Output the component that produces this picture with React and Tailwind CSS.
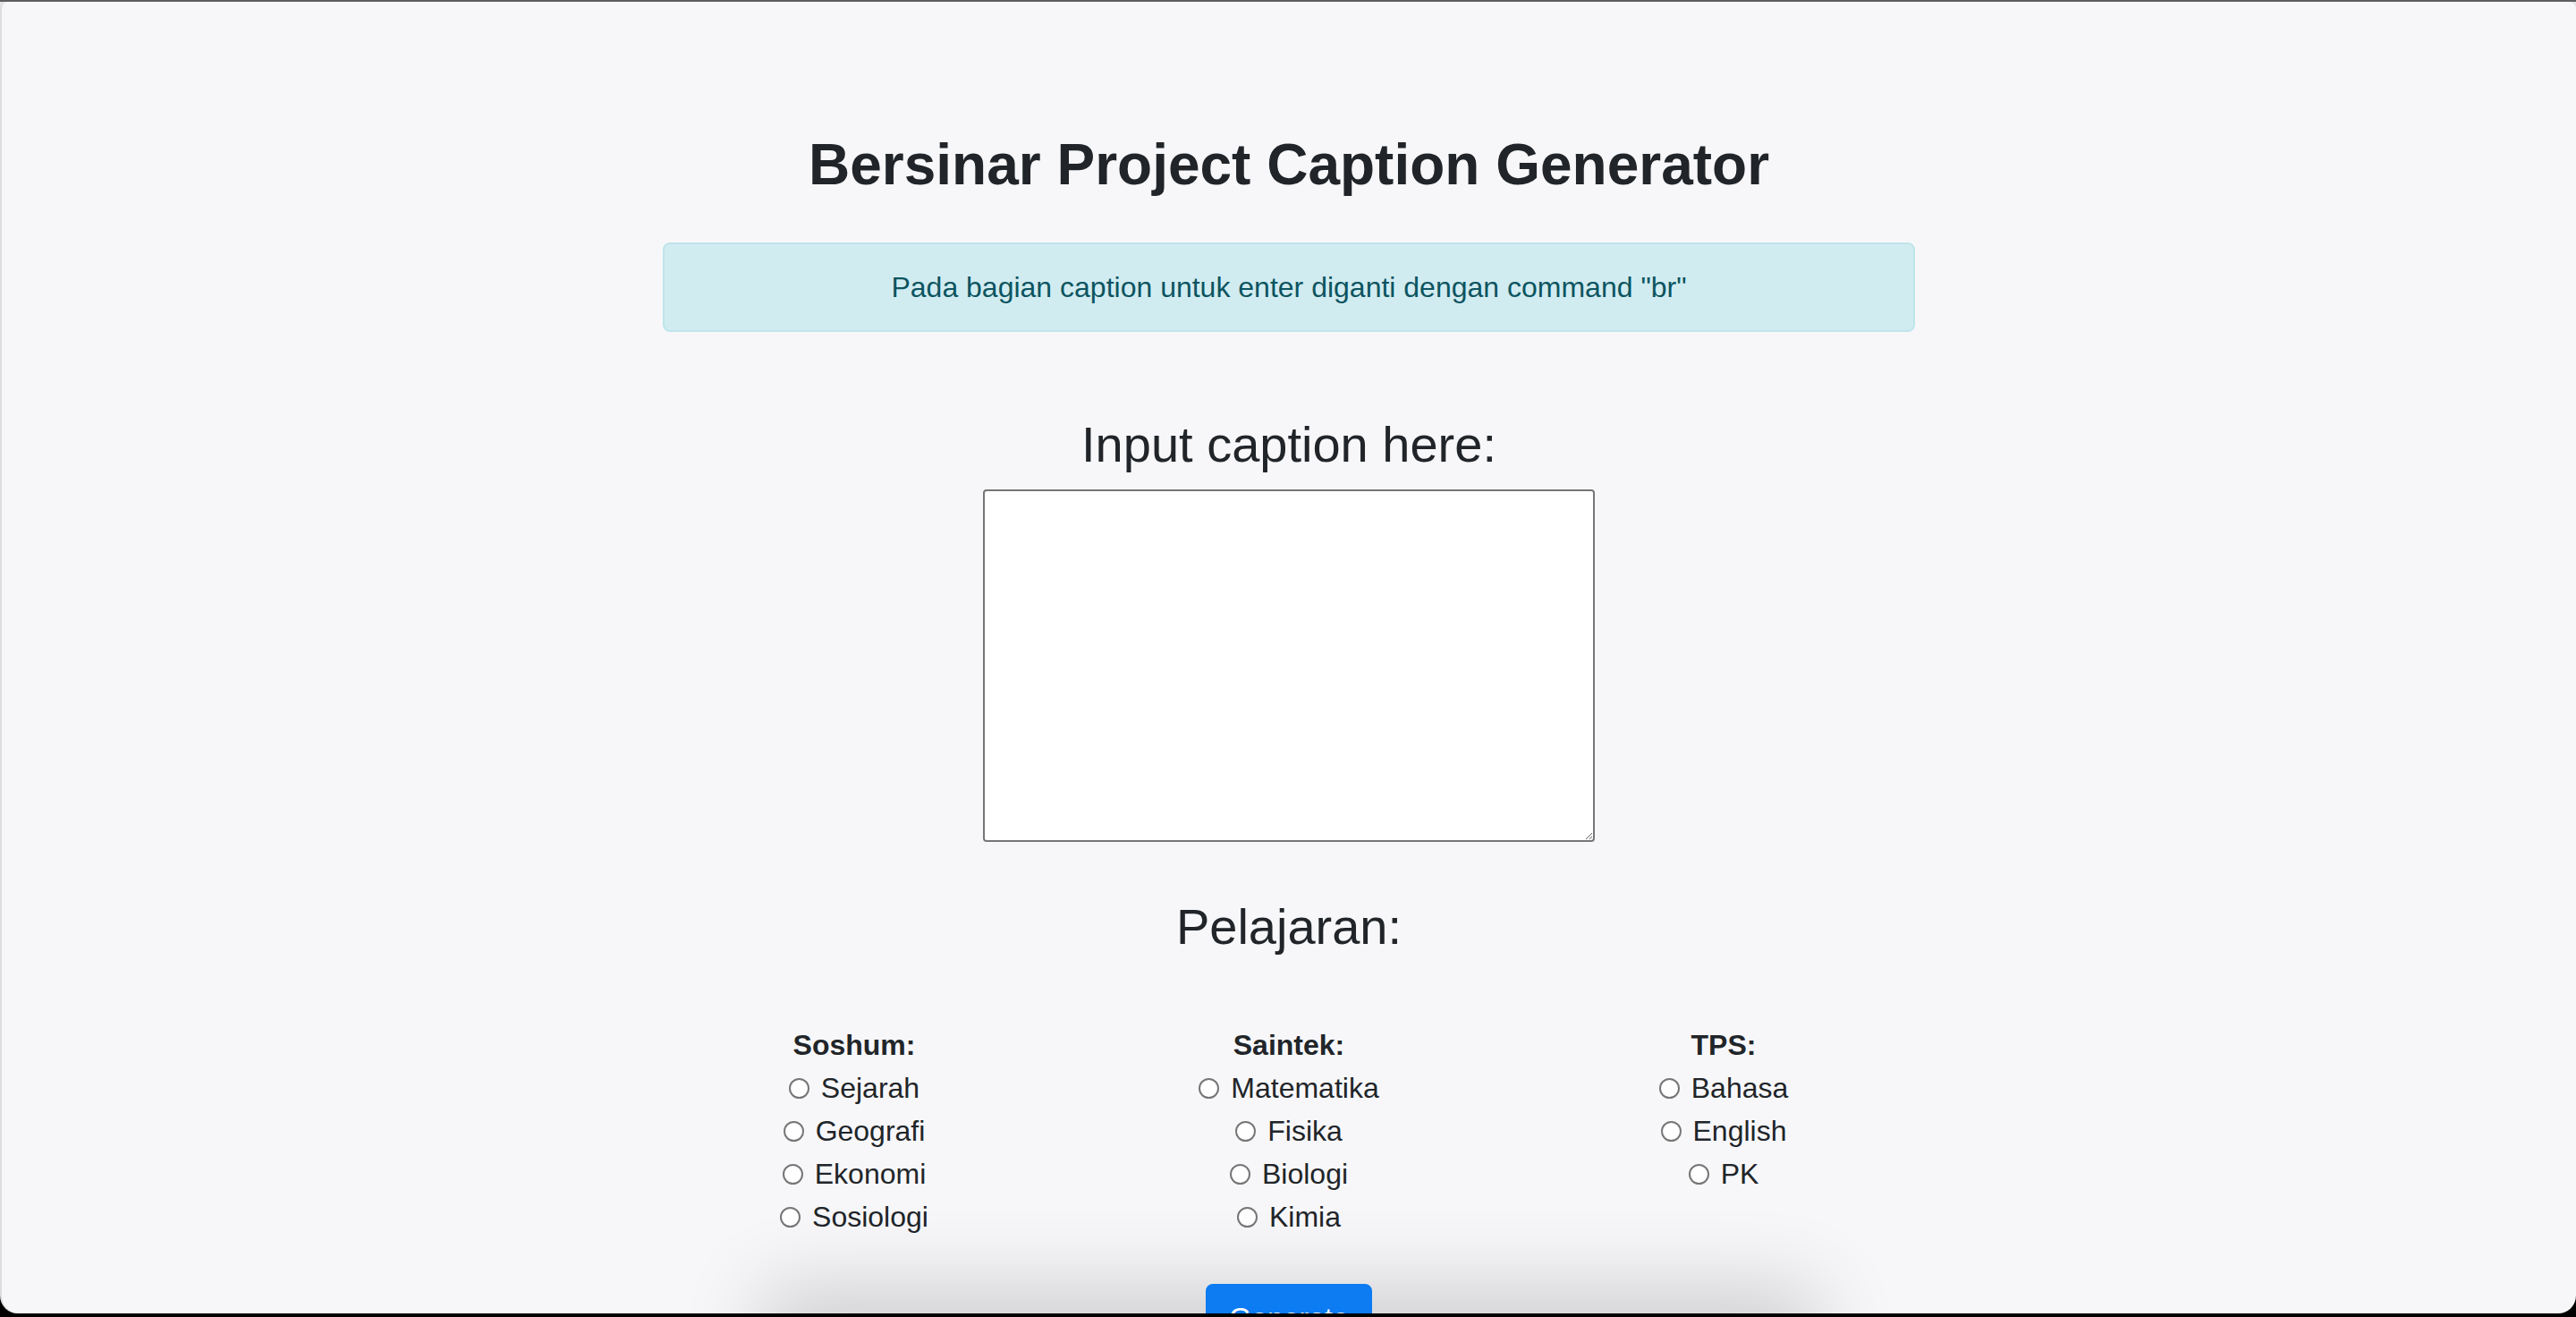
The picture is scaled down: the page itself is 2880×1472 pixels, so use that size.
import React from 'react'

const groups = [
    { title: 'Soshum:', items: ['Sejarah', 'Geografi', 'Ekonomi', 'Sosiologi'] },
    { title: 'Saintek:', items: ['Matematika', 'Fisika', 'Biologi', 'Kimia'] },
    { title: 'TPS:', items: ['Bahasa', 'English', 'PK'] },
]

const App = () => {
    return (
        <div className="w-[2880px] h-[1472px] overflow-hidden bg-[linear-gradient(to_bottom,#5e5e5e_0px,#5e5e5e_2px,#e4e4e4_2px,#e4e4e4_50%,#000_50%)] font-['Liberation_Sans',Arial,sans-serif] text-[#212529]">
            <div className="h-[2px]" />

            {/* Window */}
            <div className="relative h-[1466px] overflow-hidden rounded-t-[8px] rounded-b-[20px] border-l-2 border-[#dedee0] bg-[#f7f7f9] flex flex-col items-center pt-[144px]">
                {/* Title */}
                <h1 className="shrink-0 text-[64px] leading-[1.2] font-bold">
                    Bersinar Project Caption Generator
                </h1>

                {/* Info alert */}
                <div className="shrink-0 mt-[48px] w-[1400px] rounded-[8px] border-2 border-[#bee5eb] bg-[#d1ecf1] px-[40px] py-[24px] text-center text-[32px] leading-[48px] text-[#0c5460]">
                    Pada bagian caption untuk enter diganti dengan command "br"
                </div>

                {/* Caption input */}
                <h3 className="shrink-0 mt-[92px] mb-[17px] text-[56px] leading-[1.2] font-medium">Input caption here:</h3>
                <textarea className="shrink-0 w-[684px] h-[394px] rounded-[4px] border-2 border-[#767676] bg-white" />

                {/* Subjects */}
                <h3 className="shrink-0 mt-[61px] text-[56px] leading-[1.2] font-medium">Pelajaran:</h3>
                <div className="shrink-0 mt-[75px] grid grid-cols-3 w-[1458px] text-[32px] leading-[48px]">
                    {groups.map((group) => (
                        <div key={group.title} className="flex flex-col items-center">
                            <b className="font-bold">{group.title}</b>
                            {group.items.map((item) => (
                                <label key={item} className="flex items-center gap-[13px]">
                                    <input
                                        type="radio"
                                        name="pelajaran"
                                        value={item}
                                        className="appearance-none w-[23px] h-[23px] rounded-full border-2 border-[#767676] bg-white"
                                    />
                                    <span>{item}</span>
                                </label>
                            ))}
                        </div>
                    ))}
                </div>

                {/* Generate button */}
                <button className="shrink-0 relative z-10 mt-[51px] rounded-[8px] border-2 border-[#0d7bf2] bg-[#0d7bf2] px-[24px] py-[12px] text-[32px] leading-[48px] text-white">
                    Generate
                </button>

                {/* shadow from the bar below the viewport */}
                <div className="absolute left-[880px] top-full w-[1120px] h-[200px] bg-white shadow-[0_0_90px_30px_rgba(0,0,0,0.16)]" />
            </div>
        </div>
    )
}

export default App
